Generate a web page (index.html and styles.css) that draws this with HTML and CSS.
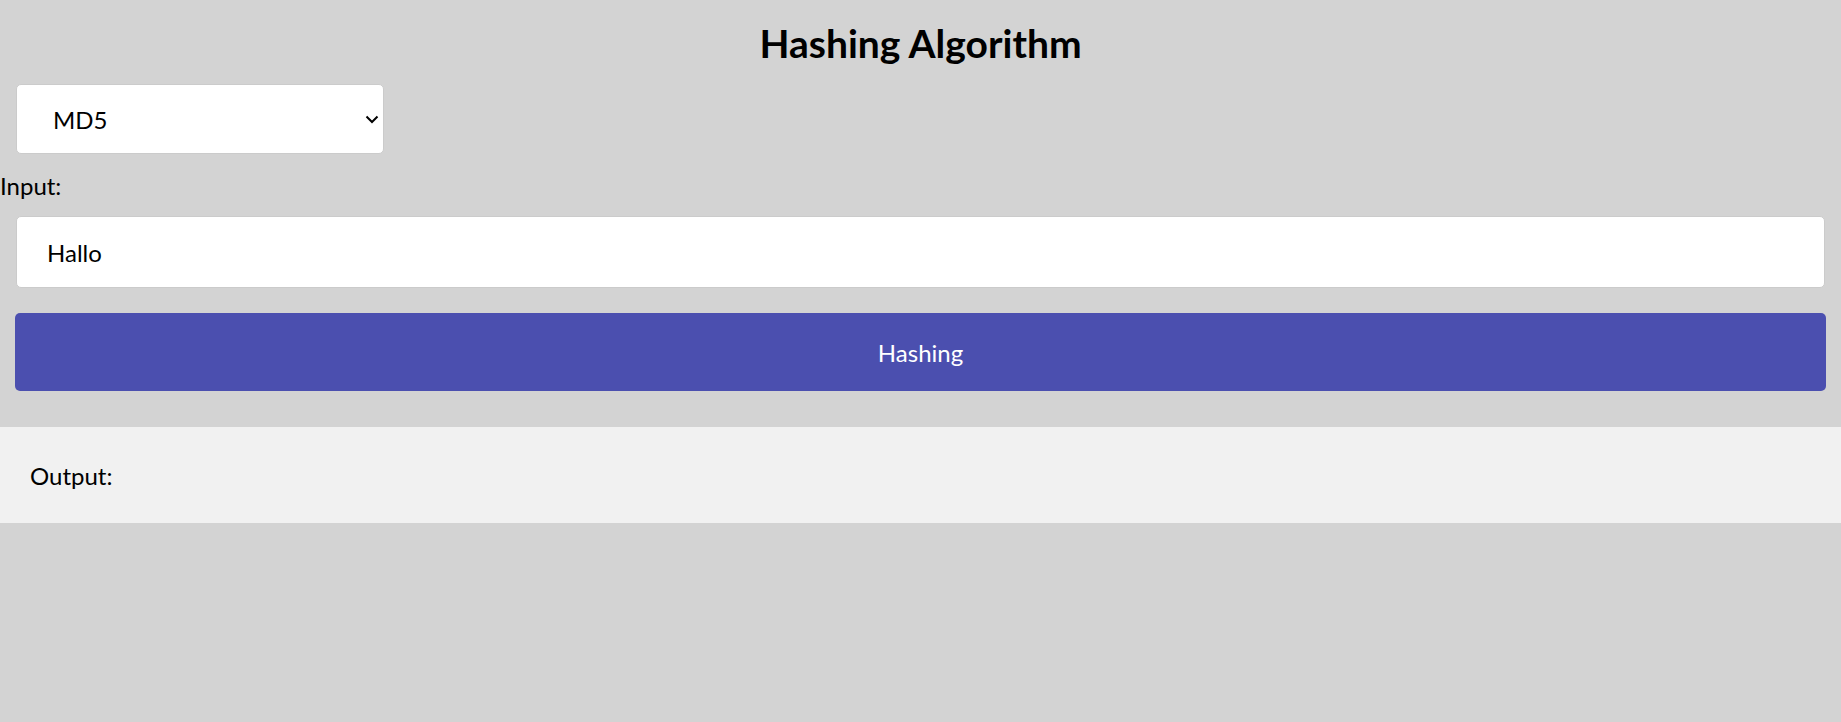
FILE: index.html
```html
<!DOCTYPE html>
<html lang="en">
<head>
<meta charset="utf-8">
<title>Hashing Algorithm</title>
<link rel="stylesheet" href="styles.css">
</head>
<body>
  <main class="hasher">
    <h1 class="title">Hashing Algorithm</h1>
    <div class="select-wrap">
      <select class="algo" aria-label="Algorithm">
        <option>MD5</option>
        <option>SHA-1</option>
        <option>SHA-256</option>
      </select>
      <svg class="chevron" width="14" height="9" viewBox="0 0 14 9" aria-hidden="true"><path d="M1.5 1.5 L7 7 L12.5 1.5" fill="none" stroke="#000" stroke-width="2"/></svg>
    </div>
    <label class="field-label" for="input">Input:</label>
    <input id="input" class="text-input" type="text" value="Hallo">
    <button class="hash-btn" type="button">Hashing</button>
  </main>
  <section class="output">Output:</section>
</body>
</html>
```
FILE: styles.css
```css
* { box-sizing: border-box; }

html, body {
  margin: 0;
  background: #d3d3d3;
  font-family: "Lato", "Open Sans", sans-serif;
  color: #000;
}

.hasher {
  display: flex;
  flex-direction: column;
  align-items: flex-start;
}

.title {
  align-self: stretch;
  margin: 20px 0 0;
  font-size: 39px;
  line-height: 47px;
  font-weight: 700;
  text-align: center;
}

.select-wrap {
  position: relative;
  margin: 17px 0 0 16px;
  width: 368px;
  height: 70px;
}

.algo {
  appearance: none;
  -webkit-appearance: none;
  width: 100%;
  height: 100%;
  border: 1px solid #cbcbcb;
  border-radius: 5px;
  background: #fff;
  padding: 0 40px 0 36px;
  font: inherit;
  font-size: 24px;
  color: #000;
}

.chevron {
  position: absolute;
  right: 5px;
  top: 31px;
  pointer-events: none;
}

.field-label {
  margin-top: 17px;
  font-size: 24px;
  line-height: 29px;
}

.text-input {
  align-self: stretch;
  margin: 16px 16px 0 16px;
  height: 72px;
  border: 1px solid #cbcbcb;
  border-radius: 5px;
  background: #fff;
  padding: 0 30px;
  font: inherit;
  font-size: 24px;
  color: #000;
}

.hash-btn {
  align-self: stretch;
  margin: 25px 15px 0 15px;
  height: 78px;
  border: none;
  border-radius: 5px;
  background: #4b4faf;
  color: #fff;
  font: inherit;
  font-size: 24px;
}

.output {
  margin-top: 36px;
  background: #f1f1f1;
  padding: 34px 30px 33px;
  font-size: 24px;
  line-height: 29px;
}
```
